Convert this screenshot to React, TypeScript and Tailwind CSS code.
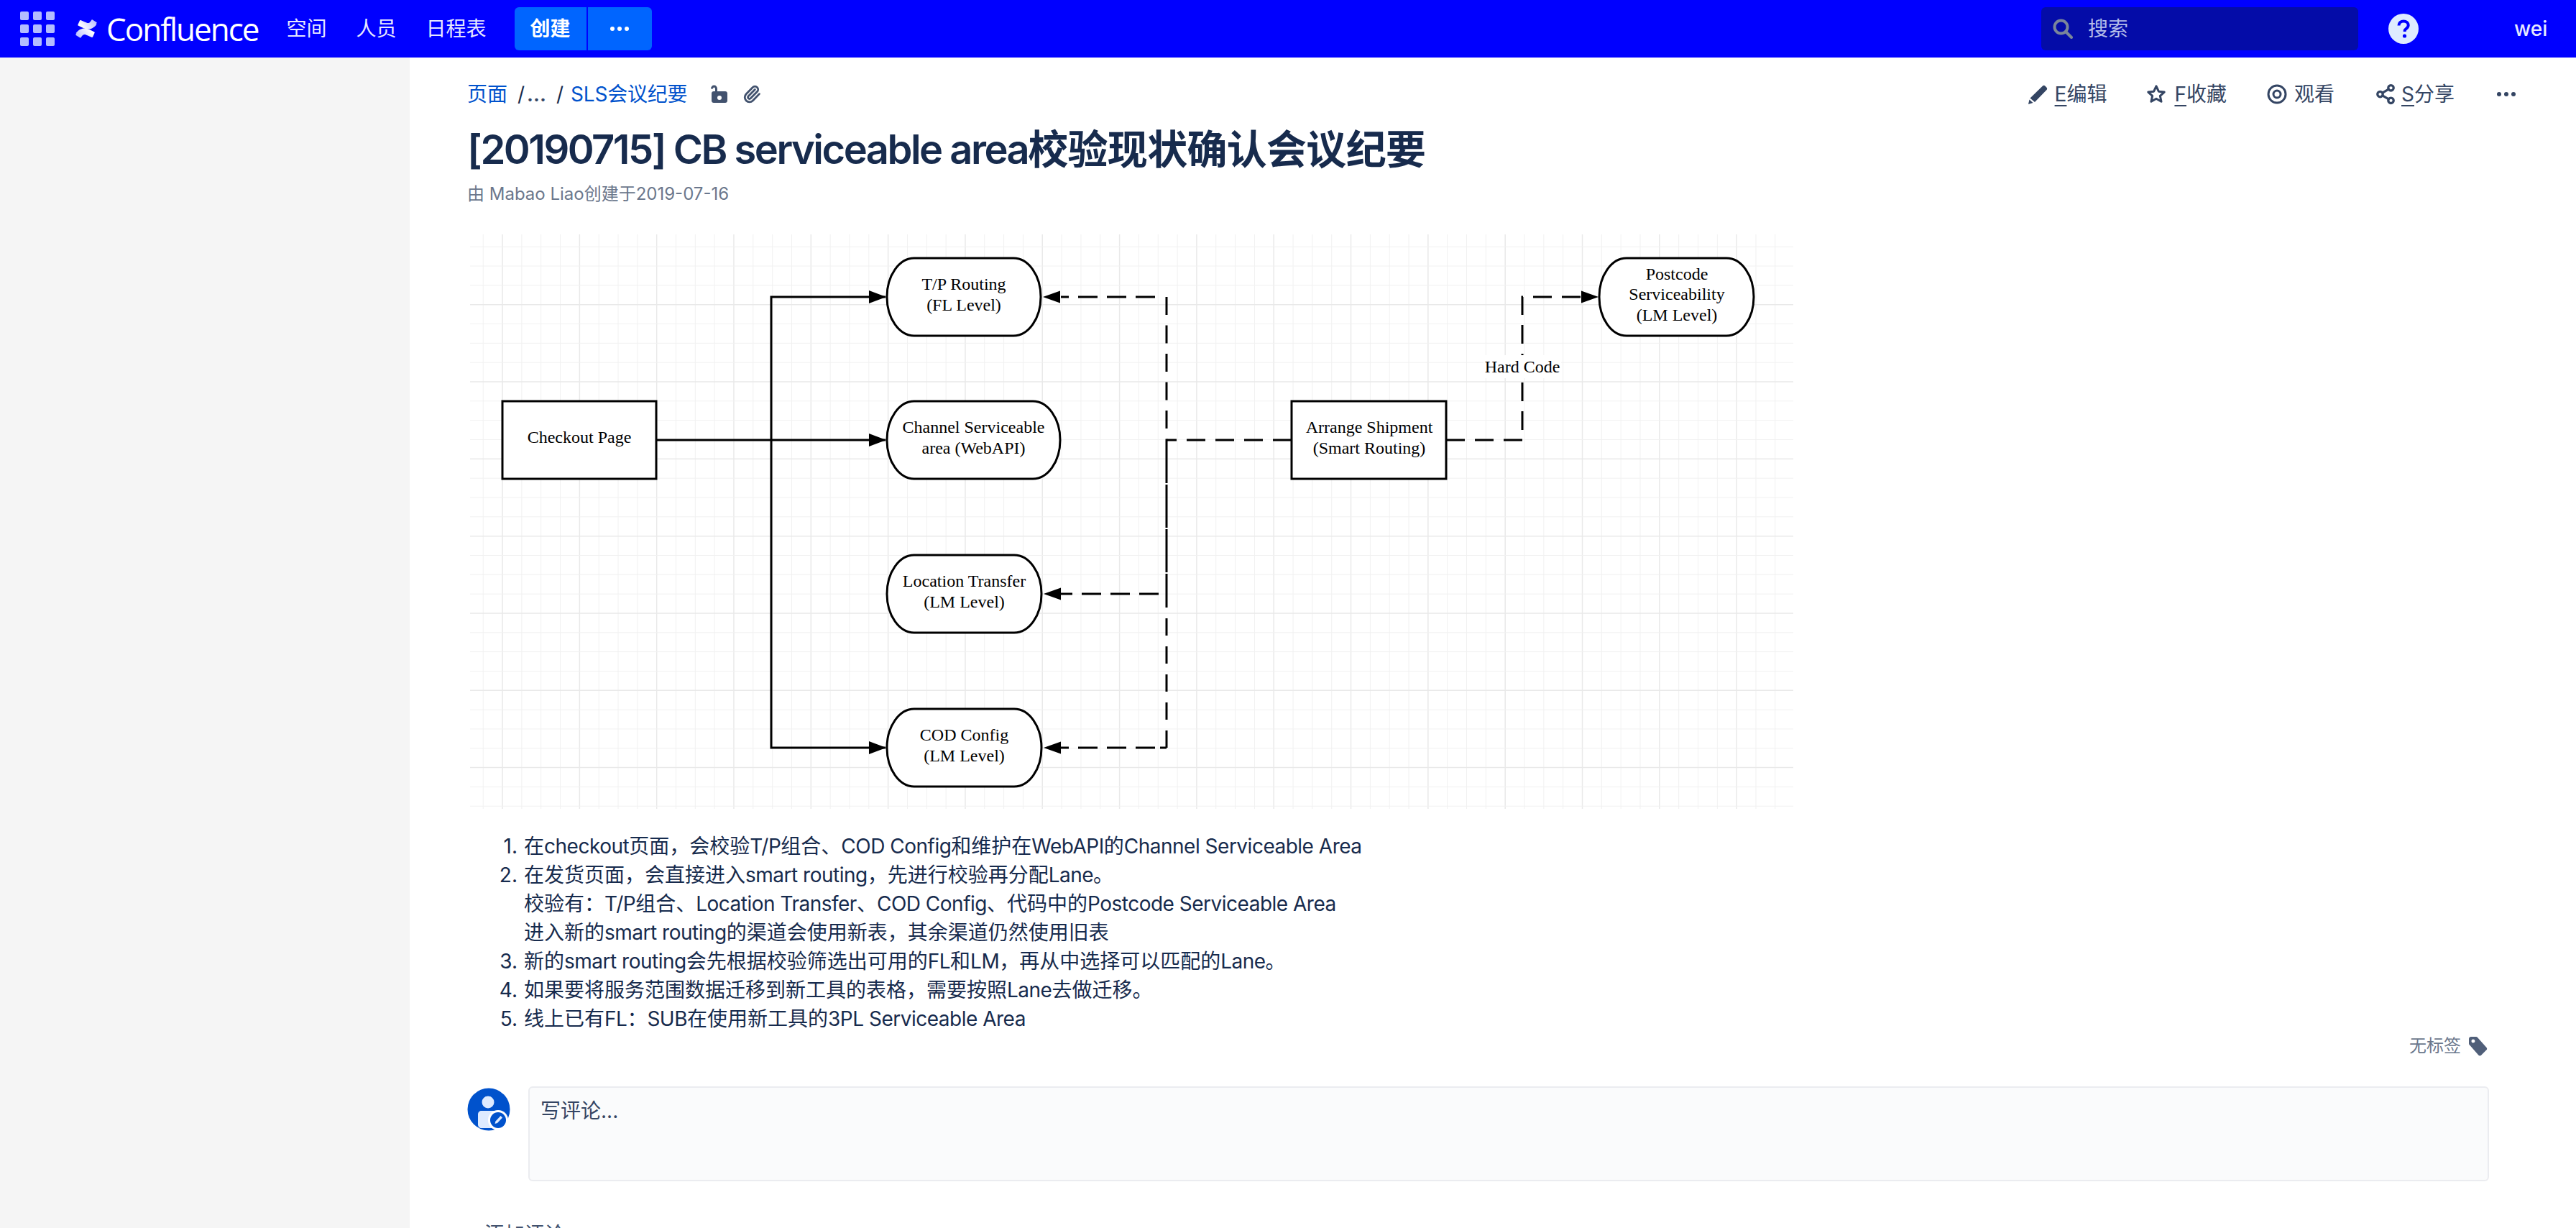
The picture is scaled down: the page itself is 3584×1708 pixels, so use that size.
import { Paperclip, Share2 } from "lucide-react";

const sans = "font-['Inter','Noto_Sans_CJK_SC',sans-serif]";

const gridX = Array.from({ length: 70 }, (_, i) => 672.2 + i * 26.83).filter((x) => x < 2495);
const gridY = Array.from({ length: 31 }, (_, i) => 343.2 + i * 26.83).filter((y) => y < 1125);

const listItems = [
  ["在checkout页面，会校验T/P组合、COD Config和维护在WebAPI的Channel Serviceable Area"],
  [
    "在发货页面，会直接进入smart routing，先进行校验再分配Lane。",
    "校验有：T/P组合、Location Transfer、COD Config、代码中的Postcode Serviceable Area",
    "进入新的smart routing的渠道会使用新表，其余渠道仍然使用旧表",
  ],
  ["新的smart routing会先根据校验筛选出可用的FL和LM，再从中选择可以匹配的Lane。"],
  ["如果要将服务范围数据迁移到新工具的表格，需要按照Lane去做迁移。"],
  ["线上已有FL：SUB在使用新工具的3PL Serviceable Area"],
];

const pills = [
  { x: 1234, y: 359, w: 214, lines: ["T/P Routing", "(FL Level)"], cy: 403 },
  { x: 1234, y: 558, w: 241, lines: ["Channel Serviceable", "area (WebAPI)"], cy: 602 },
  { x: 1234, y: 772, w: 215, lines: ["Location Transfer", "(LM Level)"], cy: 816 },
  { x: 1234, y: 986, w: 215, lines: ["COD Config", "(LM Level)"], cy: 1030 },
];

function AppGrid() {
  return (
    <div className="grid grid-cols-3 gap-[6px] w-[48px] shrink-0">
      {Array.from({ length: 9 }, (_, i) => (
        <div key={i} className="h-[12px] w-[12px] rounded-[2px] bg-[#b3bcff]" />
      ))}
    </div>
  );
}

function ConfluenceMark() {
  return (
    <svg width="32" height="32" viewBox="0 0 32 32" className="shrink-0">
      <defs>
        <linearGradient id="cf-a" x1="1" y1="0.6" x2="0.1" y2="1">
          <stop offset="0" stopColor="#ffffff" />
          <stop offset="1" stopColor="#b9bfff" />
        </linearGradient>
      </defs>
      <path
        d="M2.4 22.3c-.3.5-.7 1.1-1 1.6-.2.4-.1 1 .3 1.2l5.6 3.5c.4.3 1 .1 1.3-.3.2-.4.6-1 1-1.6 2.3-3.7 4.5-3.3 8.6-1.3l5.6 2.6c.5.2 1 0 1.2-.4l2.7-6c.2-.5 0-1-.4-1.2-1.2-.6-3.5-1.7-5.6-2.7-7.6-3.7-14-3.4-20.3 4.6z"
        fill="url(#cf-a)"
      />
      <path
        d="M2.4 22.3c-.3.5-.7 1.1-1 1.6-.2.4-.1 1 .3 1.2l5.6 3.5c.4.3 1 .1 1.3-.3.2-.4.6-1 1-1.6 2.3-3.7 4.5-3.3 8.6-1.3l5.6 2.6c.5.2 1 0 1.2-.4l2.7-6c.2-.5 0-1-.4-1.2-1.2-.6-3.5-1.7-5.6-2.7-7.6-3.7-14-3.4-20.3 4.6z"
        fill="url(#cf-a)"
        transform="rotate(180 16 16)"
      />
    </svg>
  );
}

function Header() {
  return (
    <header className={`flex h-[80px] items-center bg-[#0000ff] pl-[28px] ${sans}`}>
      <AppGrid />
      <div className="ml-[28px] flex items-center gap-[12px]">
        <ConfluenceMark />
        <span className="text-[44px] leading-none font-normal text-white font-['Open_Sans',sans-serif] tracking-[-2px]">
          Confluence
        </span>
      </div>
      <nav className="ml-[39px] flex items-center gap-[41px] text-[28px] text-[#e6e8ff]">
        <span>空间</span>
        <span>人员</span>
        <span>日程表</span>
      </nav>
      <div className="ml-[39px] flex h-[60px] gap-[2px] text-white">
        <div className="flex w-[100px] items-center justify-center rounded-l-[6px] bg-[#0065ff] text-[28px] font-bold">
          创建
        </div>
        <div className="flex w-[89px] items-center justify-center rounded-r-[6px] bg-[#0065ff]">
          <Dots color="#ffffff" />
        </div>
      </div>
      <div className="ml-auto flex h-[60px] w-[441px] items-center rounded-[6px] bg-[#040ca8] pl-[16px]">
        <svg width="28" height="28" viewBox="0 0 28 28" fill="none" stroke="#7a869a" strokeWidth="4">
          <circle cx="11.5" cy="11.5" r="9" />
          <path d="M18 18l8 8" strokeLinecap="round" />
        </svg>
        <span className="ml-[21px] text-[28px] text-[#b3bce8]">搜索</span>
      </div>
      <svg width="42" height="42" viewBox="0 0 42 42" className="ml-[42px]">
        <circle cx="21" cy="21" r="21" fill="#deebff" />
        <path
          d="M14.5 16.5c0-3.7 2.9-6 6.6-6 3.8 0 6.6 2.3 6.6 5.6 0 2.6-1.500 3.800-3.200 5-1.300.9-1.800 1.400-1.800 3v.9"
          fill="none"
          stroke="#0000ff"
          strokeWidth="4"
        />
        <circle cx="22.500" cy="31" r="2.600" fill="#0000ff" />
      </svg>
      <div className="ml-[133px] w-[86px] text-[28px] leading-none font-medium text-[#e6e8ff]">wei</div>
    </header>
  );
}

function Dots({ color }: { color: string }) {
  return (
    <svg width="26" height="6" viewBox="0 0 26 6" fill={color}>
      <circle cx="3" cy="3" r="3" />
      <circle cx="13" cy="3" r="3" />
      <circle cx="23" cy="3" r="3" />
    </svg>
  );
}

function Shortcut({ k, label }: { k: string; label: string }) {
  return (
    <span>
      <span className="underline underline-offset-[5px] decoration-2">{k}</span>
      {label}
    </span>
  );
}

// latin runs sit a little tighter than the CJK around them
function Mixed({ text }: { text: string }) {
  return (
    <>
      {text.split(/([\x20-\x7e]+)/).map((part, i) =>
        i % 2 === 1 ? (
          <span key={i} className="tracking-[-0.5px]">
            {part}
          </span>
        ) : (
          part
        ),
      )}
    </>
  );
}

function PageToolbar() {
  return (
    <div className="flex h-[28px] items-center text-[28px] leading-[28px]">
      <span className="text-[#0052cc]">页面</span>
      <span className="ml-[14px] text-[#172b4d]">/</span>
      <span className="ml-[3px] font-semibold text-[#344563]">...</span>
      <span className="ml-[14px] text-[#172b4d]">/</span>
      <span className="ml-[10px] text-[#0052cc] tracking-[-0.2px]">SLS会议纪要</span>
      <svg width="26" height="28" viewBox="0 0 26 28" className="ml-[31px]" fill="#42526e">
        <path d="M2 6.500C2 3.500 4 1.500 6.500 1.500S11 3.500 11 6.500V10H8V6.500C8 5.500 7.400 4.500 6.500 4.500S5 5.500 5 6.500z" />
        <path
          fillRule="evenodd"
          d="M6 10h16c1.700 0 3 1.300 3 3v10c0 1.700-1.300 3-3 3H6c-1.700 0-3-1.300-3-3V13c0-1.700 1.300-3 3-3zm8 6a3 3 0 1 0 0 6 3 3 0 0 0 0-6z"
        />
      </svg>
      <Paperclip className="ml-[20px] h-[26px] w-[26px] text-[#42526e]" strokeWidth={2.6} />
      <div className="ml-auto -mr-[37px] flex items-center text-[#344563] text-[28px]">
        <svg width="27" height="27" viewBox="0 0 27 27" fill="#344563">
          <path d="M20 1.500c1-.9 2.400-.9 3.300 0l2.200 2.200c.9.900.9 2.400 0 3.300L9 24l-6.500-5.500z" />
          <path d="M1.500 20.500l5 4.500L0 27z" />
        </svg>
        <span className="ml-[10px]">
          <Shortcut k="E" label="编辑" />
        </span>
        <svg width="28" height="28" viewBox="0 0 24 24" className="ml-[55px]" fill="none" stroke="#344563" strokeWidth="2.600" strokeLinejoin="round">
          <path d="M12 2.500l2.900 6.200 6.700.8-5 4.600 1.400 6.700-6-3.400-6 3.400 1.400-6.700-5-4.600 6.700-.8z" />
        </svg>
        <span className="ml-[11px]">
          <Shortcut k="F" label="收藏" />
        </span>
        <svg width="28" height="28" viewBox="0 0 28 28" className="ml-[56px]" fill="none" stroke="#344563" strokeWidth="3">
          <circle cx="14" cy="14" r="12" />
          <circle cx="14" cy="14" r="5" />
        </svg>
        <span className="ml-[10px]">观看</span>
        <Share2 className="ml-[56px] h-[30px] w-[30px]" strokeWidth={2.6} />
        <span className="ml-[7px]">
          <Shortcut k="S" label="分享" />
        </span>
        <span className="ml-[59px] flex">
          <Dots color="#344563" />
        </span>
      </div>
    </div>
  );
}

function Diagram() {
  return (
    <svg width="1841" height="799" viewBox="654 326 1841 799" className="mt-[41px] ml-[4px] block shrink-0">
      <defs>
        <marker id="ah" markerUnits="userSpaceOnUse" markerWidth="24" markerHeight="18" refX="23" refY="9" orient="auto">
          <path d="M0 0L24 9L0 18z" fill="#000" />
        </marker>
      </defs>
      {gridX.map((x, i) => (
        <line key={x} x1={x} x2={x} y1={326} y2={1125} stroke={i % 4 === 1 ? "#e9e9e9" : "#f1f1f1"} strokeWidth={i % 4 === 1 ? 1.5 : 1} />
      ))}
      {gridY.map((y, i) => (
        <line key={y} x1={654} x2={2495} y1={y} y2={y} stroke={i % 4 === 3 ? "#e9e9e9" : "#f1f1f1"} strokeWidth={i % 4 === 3 ? 1.5 : 1} />
      ))}

      <g fill="none" stroke="#000" strokeWidth="3">
        <path d="M913 612H1232" markerEnd="url(#ah)" />
        <path d="M1073 612V413H1232" markerEnd="url(#ah)" />
        <path d="M1073 612V1040H1232" markerEnd="url(#ah)" />
      </g>
      <g fill="none" stroke="#000" strokeWidth="3">
        <path d="M1797 612H1623" strokeDasharray="26 14" />
        <path d="M1623 413V612" strokeDasharray="25 14.5" />
        <path d="M1607 413H1476" strokeDasharray="27 13" />
        <path d="M1623 612V826" strokeDasharray="60 2" />
        <path d="M1623 1040V826" strokeDasharray="24 15" />
        <path d="M1612 826H1476" strokeDasharray="27 13" />
        <path d="M1607 1040H1476" strokeDasharray="27 13" />
        <path d="M1623 1040H1614" />
        <path d="M2012 612H2118V413H2200" strokeDasharray="26 14" />
      </g>
      <g fill="#000">
        <path d="M1451 413l24-8.500v17z" />
        <path d="M1452 826l24-8.500v17z" />
        <path d="M1452 1040l24-8.500v17z" />
        <path d="M2224 413l-24-8.500v17z" />
      </g>

      <g fill="#fff" stroke="#000" strokeWidth="3">
        <rect x="699" y="558" width="214" height="108" />
        <rect x="1797" y="558" width="215" height="108" />
        {pills.map((p) => (
          <rect key={p.y} x={p.x} y={p.y} width={p.w} height="108" rx="38" ry="54" />
        ))}
        <rect x="2225" y="359" width="215" height="108" rx="38" ry="54" />
      </g>

      <g fontFamily="'Liberation Serif', serif" fontSize="24" textAnchor="middle" fill="#000">
        <text x="806" y="616">Checkout Page</text>
        {pills.map((p) =>
          p.lines.map((line, i) => (
            <text key={line + p.y} x={p.x + p.w / 2} y={p.cy + i * 29}>
              {line}
            </text>
          )),
        )}
        <text x="1905" y="602">Arrange Shipment</text>
        <text x="1905" y="631">(Smart Routing)</text>
        <text x="2333" y="389">Postcode</text>
        <text x="2333" y="417">Serviceability</text>
        <text x="2333" y="446">(LM Level)</text>
        <rect x="2064" y="494" width="108" height="32" fill="#fff" />
        <text x="2118" y="518">Hard Code</text>
      </g>
    </svg>
  );
}

function Notes() {
  return (
    <ol className="mt-[32px] text-[28px] leading-[40px] text-[#172b4d]">
      {listItems.map((lines, i) => (
        <li key={i} className="flex">
          <span className="w-[79px] shrink-0 text-right pr-[9px]">{i + 1}.</span>
          <div>
            {lines.map((line) => (
              <div key={line}>
                <Mixed text={line} />
              </div>
            ))}
          </div>
        </li>
      ))}
    </ol>
  );
}

function CommentBox() {
  return (
    <div className="mt-[41px] flex">
      <svg width="60" height="60" viewBox="0 0 60 60" className="shrink-0 mt-[2px]">
        <circle cx="30" cy="30" r="29.500" fill="#0052cc" />
        <circle cx="29" cy="20" r="8.500" fill="#deebff" />
        <path d="M15 37c0-3 2-5 5-5h20v24H20c-3 0-5-2-5-5z" fill="#deebff" />
        <circle cx="43" cy="45" r="14" fill="#fff" />
        <circle cx="43" cy="45" r="11" fill="#0052cc" />
        <path d="M46.500 39l2.500 2.500-7 7.500-3.500 1 1-3.500z" fill="#deebff" />
      </svg>
      <div className="ml-[25px] h-[132px] flex-1 rounded-[6px] border-2 border-[#ebecf0] bg-[#fafbfc] px-[15px] py-[16px] text-[28px] leading-[32px] text-[#344563]">
        写评论...
      </div>
    </div>
  );
}

export default function App() {
  return (
    <div className={`h-[1708px] w-[3584px] overflow-hidden bg-white ${sans}`}>
      <Header />
      <main className="flex h-[1628px]">
        <aside className="w-[570px] shrink-0 bg-[#f5f5f5]" />
        <section className="flex-1 pl-[80px] pr-[121px] pt-[37px]">
          <PageToolbar />
          <h1 className="mt-[27px] text-[56px] leading-[72px] font-semibold text-[#172b4d]">
            <span className="tracking-[-2.5px]">[20190715] CB serviceable area</span>
            <span className="tracking-[-0.7px]">校验现状确认会议纪要</span>
          </h1>
          <div className="mt-[11px] text-[24px] leading-[30px] text-[#6b778c]">由 Mabao Liao创建于2019-07-16</div>
          <Diagram />
          <Notes />
          <div className="mt-[3px] flex items-center justify-end text-[24px] leading-[30px] text-[#6b778c]">
            无标签
            <svg width="26" height="28" viewBox="0 0 26 28" className="ml-[11px] mr-[2px]" fill="#505f79">
              <path
                fillRule="evenodd"
                d="M3 1h7c.8 0 1.500.3 2 .9l12.500 14c.9 1 .9 2.500 0 3.400l-7.500 7.500c-1 1-2.500 1-3.500 0L1 12.500C.4 12 0 11.200 0 10.400V4c0-1.700 1.300-3 3-3zm3 3.500a2.500 2.500 0 1 0 0 5 2.500 2.500 0 0 0 0-5z"
              />
            </svg>
          </div>
          <CommentBox />
          <div className="mt-[58px] ml-[24px] text-[28px] leading-[32px] text-[#42526e]">添加评论</div>
        </section>
      </main>
    </div>
  );
}
